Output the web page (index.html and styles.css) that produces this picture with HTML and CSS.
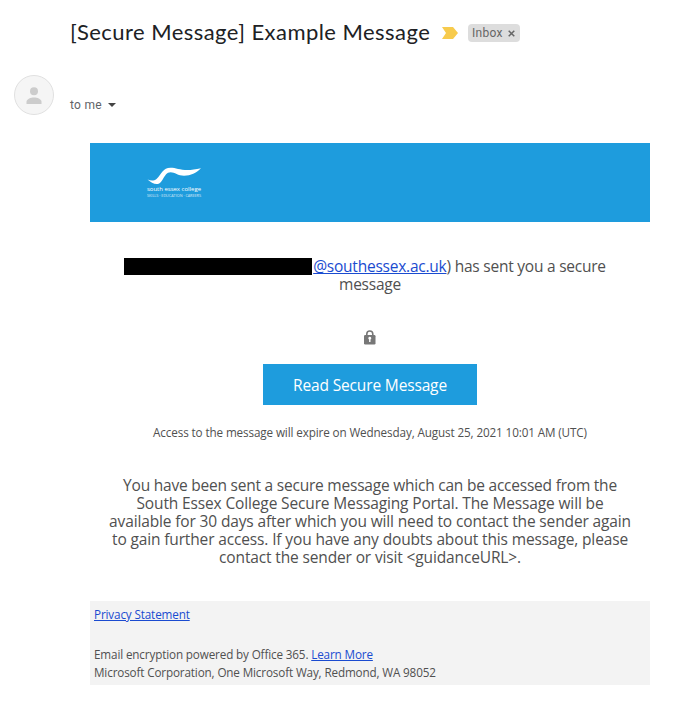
FILE: index.html
```html
<!DOCTYPE html>
<html lang="en">
<head>
    <meta charset="UTF-8">
    <meta name="viewport" content="width=device-width, initial-scale=1.0">
    <title>[Secure Message] Example Message</title>
    <link rel="stylesheet" href="styles.css">
</head>
<body>
    <header class="subject">
        <h1>[Secure Message] Example Message</h1>
        <svg class="important" width="16" height="12" viewBox="0 0 16 12"><path d="M0 0h11l5 6-5 6H0l4-6z" fill="#f7cb4d"/></svg>
        <span class="label"><span class="label-name">Inbox</span>
            <svg width="7" height="7" viewBox="0 0 7 7"><path d="M.7.7l5.6 5.6M6.3.7L.7 6.3" stroke="#666" stroke-width="1.5"/></svg>
        </span>
    </header>

    <div class="sender">
        <svg class="avatar" width="40" height="40" viewBox="0 0 40 40">
            <circle cx="20" cy="20" r="19.5" fill="#f5f5f5" stroke="#e0e0e0"/>
            <circle cx="20" cy="16.2" r="4" fill="#ccc"/>
            <path d="M12.5 29v-2.200c0-2.800 4.500-4.300 7.500-4.300s7.500 1.500 7.500 4.300V29z" fill="#ccc"/>
        </svg>
        <div class="recipient"><span>to me</span><svg width="8" height="4" viewBox="0 0 8 4"><path d="M0 0h8L4 4z" fill="#444"/></svg></div>
    </div>

    <main class="mail">
        <div class="banner">
            <svg class="logo" width="60" height="34" viewBox="0 0 60 34">
                <path d="M1.500 14.500C5 16 8 16 10.500 14 15.500 9 17 2.700 24.500 2.700 32 2.700 37 7.500 55 3.300 50 8 45 10.700 38 10.700 31 10.700 27 5.500 22 7.800 17 11 17 17.500 12 19 8 19.500 5 17.500 1.500 14.500z" fill="#fff"/>
                <text class="logo-name" x="1" y="26" textLength="54" lengthAdjust="spacingAndGlyphs">south essex college</text>
                <text class="logo-tag" x="1" y="32" textLength="54" lengthAdjust="spacingAndGlyphs">SKILLS · EDUCATION · CAREERS</text>
            </svg>
        </div>

        <p class="notice"><span class="redacted"></span><a href="#">@southessex.ac.uk</a>) has sent you a secure<br>message</p>

        <svg class="lock" width="12" height="15" viewBox="0 0 12 15">
            <path d="M2.800 6V4a3 3 0 0 1 6 0v2" fill="none" stroke="#777" stroke-width="1.600"/>
            <rect y="5" width="11.500" height="9.500" rx="1.200" fill="#777"/>
            <path d="M4.300 8.300a1.500 1.500 0 1 1 2.200 1.300V12H5.100V9.600A1.500 1.500 0 0 1 4.300 8.300z" fill="#fff"/>
        </svg>

        <a class="read-button" href="#"><span>Read Secure Message</span></a>

        <p class="expiry">Access to the message will expire on Wednesday, August 25, 2021 10:01 AM (UTC)</p>

        <p class="details">You have been sent a secure message which can be accessed from the<br>
            South Essex College Secure Messaging Portal. The Message will be<br>
            available for 30 days after which you will need to contact the sender again<br>
            to gain further access. If you have any doubts about this message, please<br>
            contact the sender or visit &lt;guidanceURL&gt;.</p>

        <footer class="legal">
            <p><a href="#">Privacy Statement</a></p>
            <p>Email encryption powered by Office 365. <a href="#">Learn More</a></p>
            <p>Microsoft Corporation, One Microsoft Way, Redmond, WA 98052</p>
        </footer>
    </main>
</body>
</html>
```
FILE: styles.css
```css
* {
    box-sizing: border-box;
}
body {
    margin: 0;
    background: #fff;
    font-family: "Segoe UI", "Open Sans", sans-serif;
    color: #505050;
}
p, h1 {
    margin: 0;
}
a {
    color: #1a4bd0;
}
.subject {
    display: flex;
    align-items: center;
    height: 46px;
    padding: 20px 0 0 70px;
}
h1 {
    width: 360px;
    padding-bottom: 2px;
    font: 400 22px/26px "Google Sans", Lato, sans-serif;
    letter-spacing: 0.45px;
    color: #202124;
    white-space: nowrap;
}
.important {
    margin-left: 12px;
}
.label {
    display: flex;
    align-items: center;
    gap: 5px;
    width: 52px;
    height: 18px;
    margin-left: 10px;
    padding-left: 4px;
    border-radius: 4px;
    background: #ddd;
    color: #666;
    font: 12px/18px Roboto, sans-serif;
    letter-spacing: 0.3px;
}
.sender {
    display: flex;
    padding: 29px 0 0 14px;
}
.recipient {
    display: flex;
    align-items: center;
    gap: 6px;
    height: 18px;
    margin: 21px 0 0 16px;
    color: #5f6368;
    font: 12px/18px Roboto, sans-serif;
    letter-spacing: 0.3px;
}
.mail {
    display: flex;
    flex-direction: column;
    align-items: center;
    width: 560px;
    margin: 28px 0 0 90px;
    text-align: center;
    white-space: nowrap;
}
.banner {
    width: 560px;
    height: 79px;
    padding: 22px 0 0 56px;
    background: #1e9cdd;
    text-align: left;
}
.logo {
    display: block;
}
.logo text {
    fill: #fff;
    font-family: "Open Sans", sans-serif;
}
.logo-name {
    font-size: 6px;
}
.logo-tag {
    font-size: 3px;
    opacity: 0.8;
}
.notice {
    width: 560px;
    height: 36px;
    margin-top: 35px;
    font-size: 15.5px;
    line-height: 18px;
    letter-spacing: -0.23px;
}
.redacted {
    display: inline-block;
    width: 188px;
    height: 17px;
    margin-left: -10px;
    margin-right: 1px;
    background: #000;
    vertical-align: -3px;
}
.lock {
    margin-top: 37px;
}
.read-button {
    width: 214px;
    height: 41px;
    margin-top: 19px;
    background: #1e9cdd;
    color: #fff;
    font-size: 15.5px;
    line-height: 43px;
    letter-spacing: -0.15px;
    text-decoration: none;
}
.expiry {
    margin-top: 18px;
    font-size: 11.7px;
    line-height: 18px;
    letter-spacing: -0.12px;
}
.details {
    width: 560px;
    margin-top: 35px;
    font-size: 15.5px;
    line-height: 18px;
    letter-spacing: -0.14px;
}
.details::first-line {
    letter-spacing: -0.22px;
}
.legal {
    width: 560px;
    height: 84px;
    margin-top: 35px;
    padding: 4px;
    background: #f3f3f3;
    font-size: 11.7px;
    line-height: 18px;
    letter-spacing: -0.14px;
    text-align: left;
}
.legal p:first-child {
    margin-bottom: 22px;
}
```
